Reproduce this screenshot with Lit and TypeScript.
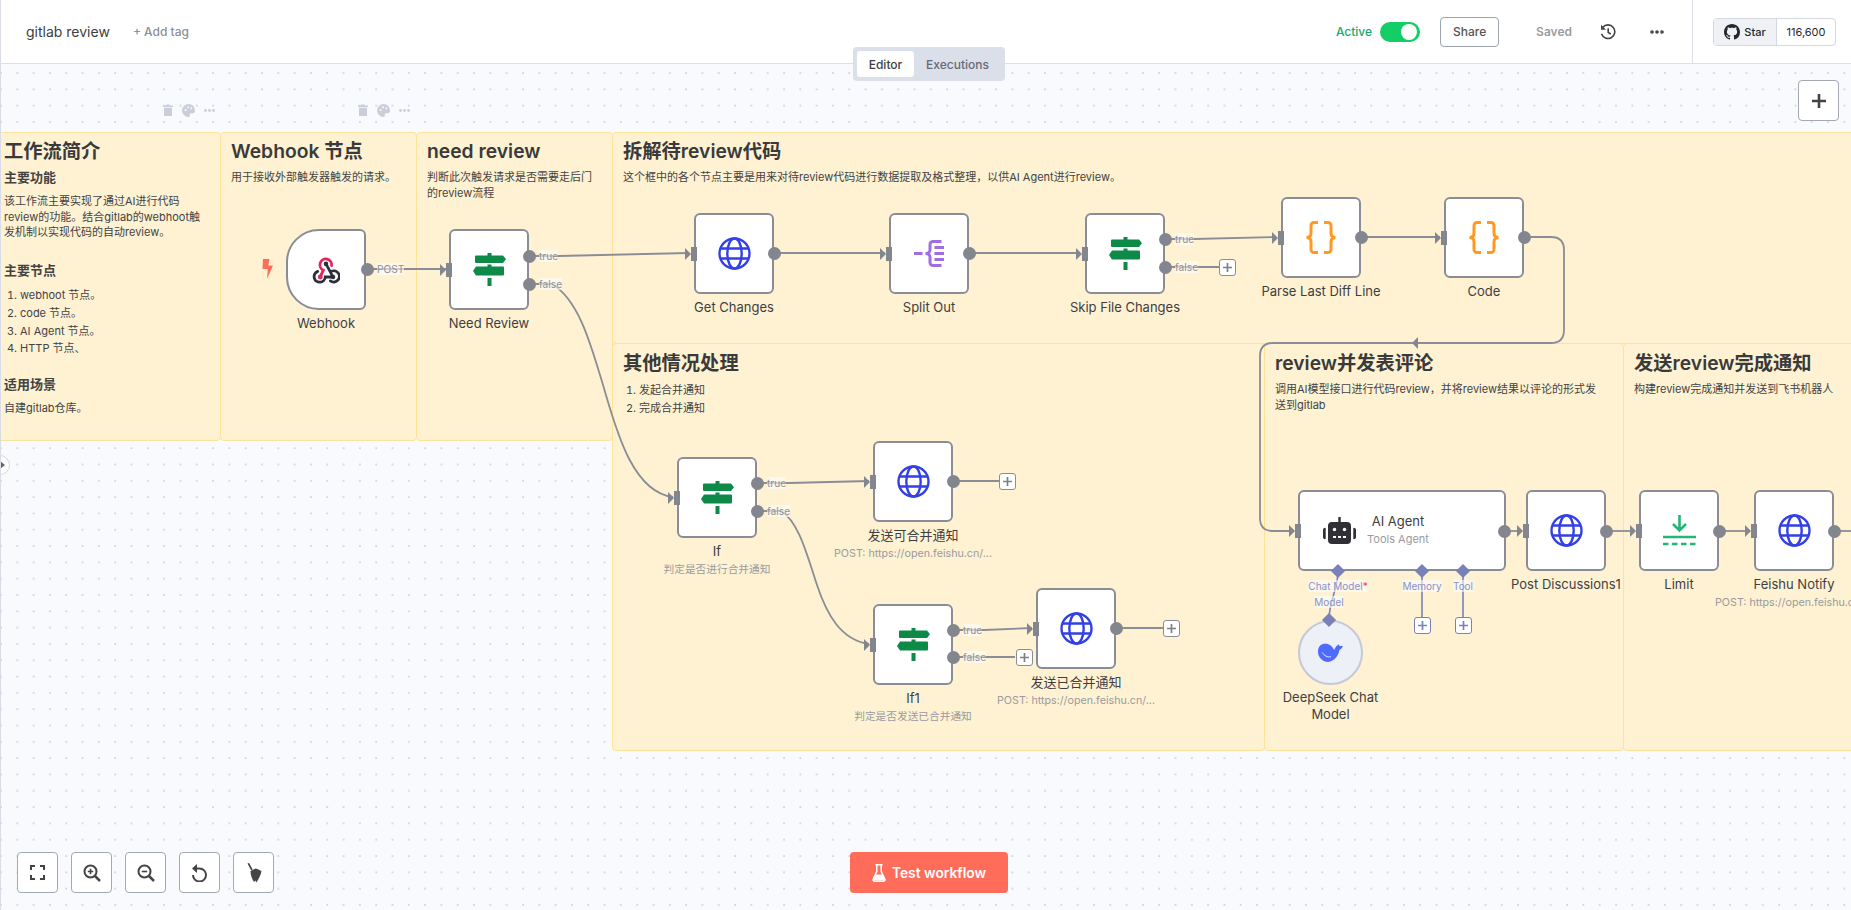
import { LitElement, css, html, svg } from "lit";
import { customElement } from "lit/decorators.js";

const icons: Record<string, any> = {
  webhook: html`<svg width="28" height="28" viewBox="0 0 32 32" fill="none" stroke-width="3.200" stroke-linecap="round">
    <path stroke="#2b303b" d="M16 9 23.8 23.5M6.500 17.600A6.400 6.400 0 1 0 15.200 24H24M21.600 17.800A6.400 6.400 0 1 1 21 28.500"/>
    <path stroke="#e0265f" d="M9.500 23.500 13 16.200A6.700 6.700 0 1 1 22.400 11"/>
    <circle cx="16" cy="9" r="2.600" fill="#2b303b" stroke="none"/>
    <circle cx="9.500" cy="24" r="2.800" fill="#e0265f" stroke="none"/>
    <circle cx="24" cy="24" r="2.600" fill="#2b303b" stroke="none"/>
  </svg>`,
  sign: html`<svg width="33" height="33" viewBox="0 0 33 33" fill="#0d8a48">
    <path d="M14.500 0h4v3h-4zM3 2.500h27l3 3.700-3 3.800H3a1 1 0 0 1-1-1V3.500a1 1 0 0 1 1-1zM14.500 11.500h4v2h-4zM3 13.500h27a1 1 0 0 1 1 1v7a1 1 0 0 1-1 1H3L0 18zM14.500 25h4v8h-4z"/>
  </svg>`,
  globe: html`<svg width="33" height="33" viewBox="0 0 33 33" fill="none" stroke="#3340e6" stroke-width="2.400">
    <circle cx="16.500" cy="16.500" r="15"/><ellipse cx="16.500" cy="16.500" rx="7.200" ry="15"/>
    <path d="M2.500 11.500h28M2.500 21.500h28"/>
  </svg>`,
  split: html`<svg width="30" height="27" viewBox="0 0 30 27" fill="none" stroke="#a06ee0" stroke-width="3">
    <path d="M0 13.500h8.500M27.500 1.500H19a3 3 0 0 0-3 3V10c0 2-2 3.500-4.500 3.500C14 13.500 16 15 16 17v5.500a3 3 0 0 0 3 3h8.500M20.500 7.500H30M20.500 13.500H30M20.500 19.500H30"/>
  </svg>`,
  code: html`<svg width="32" height="33" viewBox="0 0 32 33" fill="none" stroke="#ff9922" stroke-width="3">
    <path d="M13 1.500H9a3 3 0 0 0-3 3V12c0 3-2 4.500-4.500 4.500C4 16.500 6 18 6 21v7.500a3 3 0 0 0 3 3h4M19 1.500h4a3 3 0 0 1 3 3V12c0 3 2 4.500 4.500 4.500C28 16.500 26 18 26 21v7.500a3 3 0 0 1-3 3h-4"/>
  </svg>`,
  robot: html`<svg width="33" height="27" viewBox="0 0 33 27">
    <path fill="#2f2f35" d="M15.300 0h2.400v5h-2.400zM9 5h15a4 4 0 0 1 4 4v14a4 4 0 0 1-4 4H9a4 4 0 0 1-4-4V9a4 4 0 0 1 4-4zM0 13a2 2 0 0 1 2.700-2v11A2 2 0 0 1 0 20zM33 13a2 2 0 0 0-2.700-2v11a2 2 0 0 0 2.700-2z"/>
    <g fill="#fff"><circle cx="11.500" cy="12.500" r="1.700"/><circle cx="21.500" cy="12.500" r="1.700"/><path d="M10 19h3v2h-3zM15 19h3v2h-3zM20 19h3v2h-3z"/></g>
  </svg>`,
  limit: html`<svg width="33" height="31" viewBox="0 0 33 31" fill="none" stroke="#25b574" stroke-width="2.600">
    <path d="M16.500 0v15M10 9l6.500 6.500L23 9M0 22h33"/><path stroke-dasharray="5.500 3.500" d="M0 29h33"/>
  </svg>`,
  whale: html`<svg width="25" height="19" viewBox="0 0 24 18">
    <path fill="#4d6bfe" d="M0 8C0 3 3 .5 7 .5c4 0 7 2.500 8.500 6C16.500 4 18 2 20 1c0 1.500 1 2 2.500 1.500L24 3c-1 2-2.500 3-3.500 3.500C20 11 16.500 17 10 18 4.500 18 0 14 0 8z"/>
    <path fill="none" stroke="#eef0f7" stroke-width="0.900" d="M4 9c2 3 5 5 8.500 4"/>
  </svg>`,
  bolt: html`<svg width="11" height="20" viewBox="0 0 11 20"><path fill="#ff6d5a" d="M1 0h6.500L6.300 6.500H11L5 20l.8-10H.5z"/></svg>`,
  trash: html`<svg width="10" height="12" viewBox="0 0 10 12" fill="#c9ced8"><path d="M0 1.500h3.200V.5h3.600v1H10V3H0zM1 3.800h8V12H1z"/></svg>`,
  palette: html`<svg width="13" height="13" viewBox="0 0 13 13"><path fill="#c9ced8" d="M6.500 0a6.500 6.500 0 0 0 0 13c1.200 0 1.600-.8 1.300-1.600-.4-1 .2-2.200 1.500-2.200H11c1.200 0 2-1 2-2.700C13 2.800 10 0 6.500 0z"/><g fill="#fbfbfd"><circle cx="3.500" cy="6" r="1"/><circle cx="6" cy="3.300" r="1"/><circle cx="9.300" cy="4.300" r="1"/></g></svg>`,
  dots: html`<svg width="11" height="3" viewBox="0 0 11 3" fill="#c9ced8"><circle cx="1.500" cy="1.500" r="1.400"/><circle cx="5.500" cy="1.500" r="1.400"/><circle cx="9.500" cy="1.500" r="1.400"/></svg>`,
  fit: html`<svg width="15" height="15" viewBox="0 0 15 15" fill="none" stroke="#444" stroke-width="2"><path d="M1 5V1h4M10 1h4v4M14 10v4h-4M5 14H1v-4"/></svg>`,
  zoomIn: html`<svg width="18" height="18" viewBox="0 0 18 18" fill="none" stroke="#444" stroke-width="2"><circle cx="7.500" cy="7.500" r="6"/><path stroke-width="2.500" d="m12 12 5 5"/><path stroke-width="1.600" d="M4.800 7.500h5.400M7.500 4.800v5.400"/></svg>`,
  zoomOut: html`<svg width="18" height="18" viewBox="0 0 18 18" fill="none" stroke="#444" stroke-width="2"><circle cx="7.500" cy="7.500" r="6"/><path stroke-width="2.500" d="m12 12 5 5"/><path stroke-width="1.600" d="M4.800 7.500h5.400"/></svg>`,
  undo: html`<svg width="17" height="18" viewBox="0 0 17 18" fill="none" stroke="#444" stroke-width="2"><path d="M5 4.500h3.500A6.500 6.500 0 1 1 2 11"/><path fill="#444" stroke="none" d="M6 0v9L1 4.500z"/></svg>`,
  broom: html`<svg width="16" height="20" viewBox="0 0 16 20" fill="#444"><path d="m1.500.500 1.600-.5 3.600 6.500-1.600.8zM4.500 8l5-2.500c2.500.5 4.500 2 6 2.500-.5 4-3 8-5 11.500l-1-2L8 19C6 16 4.500 12 4.500 8z"/></svg>`,
  history: html`<svg width="16" height="16" viewBox="0 0 16 16" fill="none" stroke="#444" stroke-width="1.600"><path d="M2.800 3.300A6.800 6.800 0 1 1 1.500 9.800"/><path fill="#444" stroke="none" d="M1 .8v5h5z"/><path d="M8.200 4.200v4.300l2.600 1.500"/></svg>`,
  more: html`<svg width="14" height="4" viewBox="0 0 14 4" fill="#444"><circle cx="2" cy="2" r="1.800"/><circle cx="7" cy="2" r="1.800"/><circle cx="12" cy="2" r="1.800"/></svg>`,
  flask: html`<svg width="14" height="18" viewBox="0 0 14 18" fill="none" stroke="#fff" stroke-width="1.500"><path d="M3.500.8h7M4.800.8v6.700L1.200 15a1.500 1.500 0 0 0 1.400 2.200h8.800a1.500 1.500 0 0 0 1.400-2.200L9.200 7.500V.8"/><path fill="#fff" stroke="none" d="M3.600 10.500h6.800l2.600 6H1z"/></svg>`,
  plus: html`<svg width="16" height="16" viewBox="0 0 16 16" fill="none" stroke="#444" stroke-width="2.600"><path d="M8 1v14M1 8h14"/></svg>`,
  github: html`<svg width="16" height="16" viewBox="0 0 16 16"><path fill="#24292f" d="M8 0C3.580 0 0 3.580 0 8c0 3.540 2.290 6.530 5.470 7.590.4.070.55-.17.55-.38 0-.19-.01-.82-.01-1.490-2.010.37-2.530-.49-2.690-.94-.09-.23-.48-.94-.82-1.130-.28-.15-.68-.52-.01-.53.63-.01 1.080.58 1.230.82.72 1.210 1.870.87 2.330.66.070-.52.28-.87.51-1.070-1.780-.2-3.640-.89-3.640-3.950 0-.87.31-1.590.82-2.150-.08-.2-.36-1.020.08-2.120 0 0 .67-.21 2.200.82.64-.18 1.320-.27 2-.27s1.360.09 2 .27c1.530-1.040 2.200-.82 2.200-.82.44 1.100.16 1.920.08 2.120.51.56.82 1.270.82 2.150 0 3.070-1.870 3.750-3.650 3.950.29.25.54.73.54 1.480 0 1.070-.01 1.930-.01 2.200 0 .21.15.46.55.38A8.010 8.010 0 0 0 16 8c0-4.420-3.580-8-8-8z"/></svg>`,
};

type GraphNode = { x: number; y: number; label: string; sub?: string; icon: string; cls?: string; noInput?: boolean };

const nodes: GraphNode[] = [
  { x: 287, y: 229, label: "Webhook", icon: "webhook", cls: "trigger", noInput: true },
  { x: 450, y: 229, label: "Need Review", icon: "sign" },
  { x: 695, y: 213, label: "Get Changes", icon: "globe" },
  { x: 890, y: 213, label: "Split Out", icon: "split" },
  { x: 1086, y: 213, label: "Skip File Changes", icon: "sign" },
  { x: 1282, y: 197, label: "Parse Last Diff Line", icon: "code" },
  { x: 1445, y: 197, label: "Code", icon: "code" },
  { x: 678, y: 457, label: "If", sub: "判定是否进行合并通知", icon: "sign" },
  { x: 874, y: 441, label: "发送可合并通知", sub: "POST: https://open.feishu.cn/...", icon: "globe" },
  { x: 874, y: 604, label: "If1", sub: "判定是否发送已合并通知", icon: "sign" },
  { x: 1037, y: 588, label: "发送已合并通知", sub: "POST: https://open.feishu.cn/...", icon: "globe" },
  { x: 1527, y: 490, label: "Post Discussions1", icon: "globe" },
  { x: 1640, y: 490, label: "Limit", icon: "limit" },
  { x: 1755, y: 490, label: "Feishu Notify", sub: "POST: https://open.feishu.cn/...", icon: "globe" },
];

// output dots, one per connector
const dots: [number, number][] = [
  [368, 269], [530, 256], [530, 284], [775, 253], [970, 253], [1166, 239], [1166, 267], [1362, 237], [1525, 237],
  [758, 483], [758, 511], [954, 481], [954, 630], [954, 657], [1117, 628], [1505, 531], [1607, 531], [1720, 531], [1835, 531],
];

const edges = [
  "M368 269H447",
  "M530 256H560L690 253",
  "M775 253H886", "M970 253H1081",
  "M1166 239H1195L1277 237", "M1166 267H1220",
  "M1362 237H1441",
  "M1525 237H1552Q1565 237 1565 250V330Q1565 343 1552 343H1274Q1261 343 1261 356V518Q1261 531 1274 531H1293",
  "M530 284H553C580 300 592 345 604 385C616 425 632 492 674 497",
  "M758 483H790L870 481", "M758 511H782C800 522 808 555 818 585C828 615 842 640 870 644",
  "M954 481H1000", "M954 630H985L1033 628", "M954 657H1016", "M1117 628H1164",
  "M1505 531H1522", "M1607 531H1636", "M1720 531H1750", "M1835 531H1852",
];

const aiEdges = ["M1423 571V617", "M1464 571V617", "M1339 571C1339 590 1330 600 1330 620"];

const pluses: [number, number, boolean][] = [
  [1228, 267, false], [1008, 481, false], [1025, 657, false], [1172, 628, false], [1423, 625, true], [1464, 625, true],
];

const edgeLabels: [number, number, string][] = [
  [378, 269, "POST"], [540, 256, "true"], [540, 284, "false"], [1176, 239, "true"], [1176, 267, "false"],
  [768, 483, "true"], [768, 511, "false"], [964, 630, "true"], [964, 657, "false"],
];

const portLabels: [number, number, string, boolean][] = [
  [1339, 586, "Chat Model", true], [1423, 586, "Memory", false], [1464, 586, "Tool", false], [1330, 602, "Model", false],
];

@customElement("app-root")
export class AppRoot extends LitElement {
  static styles = css`
    :host {
      display: flex;
      flex-direction: column;
      width: 1851px;
      height: 910px;
      font-family: Inter, "Noto Sans CJK SC", sans-serif;
      color: #3e3e42;
      overflow: hidden;
      box-sizing: border-box;
      border-left: 1px solid #d9dde8;
    }
    header {
      height: 63px;
      flex: none;
      display: flex;
      align-items: center;
      background: #fff;
      border-bottom: 1px solid #dbdfe7;
      padding-left: 25px;
    }
    .name { font-size: 14px; }
    .tag { font-size: 12px; font-weight: 500; color: #8c8f98; margin-left: 23px; }
    .spacer { flex: 1; }
    .active { font-size: 12px; font-weight: 500; color: #17a673; }
    .toggle {
      width: 40px; height: 20px; margin-left: 8px; border-radius: 10px; background: #13ce66;
      display: flex; justify-content: flex-end; align-items: center; padding-right: 3px; box-sizing: border-box;
    }
    .toggle i { width: 16px; height: 16px; border-radius: 50%; background: #fff; }
    .share {
      width: 59px; height: 30px; margin-left: 20px; box-sizing: border-box; border: 1px solid #9ca3b3; border-radius: 4px;
      display: flex; align-items: center; justify-content: center; font-size: 12px; font-weight: 500; color: #555;
    }
    .saved { font-size: 12px; font-weight: 600; color: #9a9ca3; margin-left: 37px; }
    .hist { margin-left: 28px; display: flex; }
    .more { margin-left: 34px; display: flex; }
    .gh-wrap {
      margin-left: 28px; width: 159px; height: 100%; box-sizing: border-box; border-left: 1px solid #dbdfe7;
      display: flex; align-items: center; padding-left: 20px;
    }
    .gh {
      display: flex; height: 28px; width: 123px; box-sizing: border-box; border: 1px solid #d5d8de; border-radius: 4px;
      font-size: 11px; color: #24292f; overflow: hidden;
    }
    .gh .star {
      width: 62px; background: #eff1f4; border-right: 1px solid #d5d8de; display: flex; align-items: center;
      justify-content: center; gap: 4px; font-weight: 500;
    }
    .gh .count { flex: 1; display: flex; align-items: center; justify-content: center; }
    .canvas {
      position: relative;
      flex: 1;
      background-color: #f9fafd;
      background-image: radial-gradient(circle at 1px 1px, #c9ccd4 0.55px, transparent 0.95px);
      background-size: 16.32px 16.32px;
      background-position: -1px 8px;
    }
    .world { position: absolute; left: -2px; top: -64px; width: 1853px; height: 910px; overflow: hidden; }
    .frame {
      position: absolute; box-sizing: border-box; background: #fef2d3; border: 1px solid #fde29a; border-radius: 4px;
      padding: 5px 10px; font-size: 11px; line-height: 15.700px; color: #434343;
    }
    .frame.top { padding-top: 4px; }
    .frame h1 { margin: 0; font-size: 19.300px; line-height: 28px; font-weight: 600; color: #3a3a3a; }
    .frame h3 { margin: 0; font-size: 13px; line-height: 18px; font-weight: 600; }
    .frame p { margin: 5px 0 0; }
    .frame ol { margin: 5px 0 0; padding-left: 16px; line-height: 17.700px; }
    .frame .lead { margin-top: 8px; }
    .frame.intro { padding-left: 13px; }
    .frame.intro h3 { margin-top: 3px; }
    .frame.intro h3.gap { margin-top: 20px; }
    .frame.intro h3.gap2 { margin-top: 17px; }
    .frame.intro ol { margin-top: 8px; }
    .edges { position: absolute; left: 0; top: 0; }
    .node {
      position: absolute; box-sizing: border-box; width: 80px; height: 81px; background: #fff;
      border: 2px solid #8a8d96; border-radius: 6px; display: flex; align-items: center; justify-content: center;
    }
    .node.trigger { border-radius: 33px 6px 6px 33px; }
    .caption {
      position: absolute; top: 100%; left: 50%; transform: translateX(-50%); padding-top: 7px; text-align: center; white-space: nowrap;
      font-size: 13px; line-height: 17px; color: #3e3e42;
    }
    .caption small { display: block; font-size: 10.700px; line-height: 13px; color: #9a9a9f; margin-top: 3px; }
    .agent {
      position: absolute; left: 1299px; top: 490px; width: 208px; height: 81px; box-sizing: border-box; background: #fff;
      border: 2px solid #8a8d96; border-radius: 6px; display: flex; align-items: center; padding-left: 23px;
    }
    .agent .txt { margin-left: 6px; width: 72px; text-align: center; font-size: 13px; line-height: 17px; }
    .agent small { display: block; font-size: 11px; color: #9a9a9f; margin-top: 1px; }
    .bubble {
      position: absolute; left: 1299px; top: 620px; width: 65px; height: 65px; box-sizing: border-box; border-radius: 50%;
      background: #eef0f7; border: 2px solid #c4c8d8; display: flex; align-items: center; justify-content: center;
    }
    .bubble .caption { line-height: 17px; padding-top: 6px; }
    .dot { position: absolute; width: 13px; height: 13px; margin: -6.500px 0 0 -6.500px; border-radius: 50%; background: #83868e; }
    .port { position: absolute; width: 6px; height: 14px; margin-top: -7px; background: #83868e; }
    .port::before {
      content: ""; position: absolute; right: 100%; top: 1px; border-style: solid; border-width: 6px 0 6px 6px;
      border-color: transparent transparent transparent #83868e;
    }
    .arrow-left {
      position: absolute; left: 1413px; top: 337px; border-style: solid; border-width: 6px 6px 6px 0;
      border-color: transparent #83868e transparent transparent;
    }
    .diamond { position: absolute; width: 10px; height: 10px; margin: -5px 0 0 -5px; background: #7a80b8; transform: rotate(45deg); }
    .plus {
      position: absolute; width: 17px; height: 17px; margin: -8.500px 0 0 -8.500px; box-sizing: border-box; background: #fff;
      border: 1.500px solid #8a8d96; border-radius: 3px; display: flex; align-items: center; justify-content: center;
      color: #7d8089;
    }
    .plus svg { display: block; }
    .plus.ai { border-color: #7a80b8; color: #7a80b8; }
    .elabel {
      position: absolute; transform: translateY(-50%); font-size: 10.200px; line-height: 12px; color: #8f9097;
      background: rgba(252, 252, 253, 0.6);
    }
    .plabel {
      position: absolute; transform: translate(-50%, -50%); font-size: 10px; line-height: 12px; color: #8b90c6; white-space: nowrap;
      background: rgba(252, 252, 253, 0.6);
    }
    .plabel b { color: #ff3355; font-weight: 400; }
    .tools { position: absolute; display: flex; align-items: center; gap: 9px; top: 103px; height: 14px; }
    .tabs {
      position: absolute; left: 852px; top: -17px; width: 152px; height: 34px; box-sizing: border-box; padding: 4px; background: #dbdfe9;
      border-radius: 4px; display: flex; align-items: stretch; font-size: 12px; font-weight: 500; color: #666a76;
    }
    .tabs span { display: flex; align-items: center; justify-content: center; }
    .tabs .on { width: 57px; background: #fff; border-radius: 3px; color: #3e3e42; }
    .tabs .off { flex: 1; }
    .btn {
      width: 41px; height: 41px; box-sizing: border-box; background: #fff; border: 1px solid #a4a8b4; border-radius: 4px;
      display: flex; align-items: center; justify-content: center;
    }
    .add { position: absolute; right: 12px; top: 16px; }
    .controls { position: absolute; left: 16px; bottom: 17px; display: flex; gap: 13px; }
    .run {
      position: absolute; left: 849px; bottom: 17px; width: 158px; height: 41px; border-radius: 4px; background: #ff6d5a; color: #fff;
      display: flex; align-items: center; justify-content: center; gap: 6px; font-size: 13.800px; font-weight: 600;
    }
    .collapse {
      position: absolute; left: -11px; top: 391px; width: 20px; height: 20px; border-radius: 50%; background: #fff; border: 1px solid #d5d8e2;
      display: flex; align-items: center; justify-content: flex-end; padding-right: 4px; box-sizing: border-box;
    }
    .collapse i { border-style: solid; border-width: 4px 0 4px 5px; border-color: transparent transparent transparent #666; }
  `;

  private frameStyle(x: number, y: number, w: number, h: number) {
    return `left:${x + 1}px;top:${y}px;width:${w}px;height:${h}px`;
  }

  private renderFrames() {
    return html`
      <div class="frame top intro" style=${this.frameStyle(-10, 132, 231, 309)}>
        <h1>工作流简介</h1>
        <h3>主要功能</h3>
        <p class="lead">该工作流主要实现了通过AI进行代码<br />review的功能。结合gitlab的webhoot触<br />发机制以实现代码的自动review。</p>
        <h3 class="gap">主要节点</h3>
        <ol><li>webhoot 节点。</li><li>code 节点。</li><li>AI Agent 节点。</li><li>HTTP 节点、</li></ol>
        <h3 class="gap2">适用场景</h3>
        <p class="lead">自建gitlab仓库。</p>
      </div>
      <div class="frame top" style=${this.frameStyle(220, 132, 197, 309)}>
        <h1>Webhook 节点</h1>
        <p>用于接收外部触发器触发的请求。</p>
      </div>
      <div class="frame top" style=${this.frameStyle(416, 132, 197, 309)}>
        <h1>need review</h1>
        <p>判断此次触发请求是否需要走后门<br />的review流程</p>
      </div>
      <div class="frame top" style=${this.frameStyle(612, 132, 1270, 212)}>
        <h1>拆解待review代码</h1>
        <p>这个框中的各个节点主要是用来对待review代码进行数据提取及格式整理，以供AI Agent进行review。</p>
      </div>
      <div class="frame" style=${this.frameStyle(612, 343, 653, 408)}>
        <h1>其他情况处理</h1>
        <ol><li>发起合并通知</li><li>完成合并通知</li></ol>
      </div>
      <div class="frame" style=${this.frameStyle(1264, 343, 360, 408)}>
        <h1>review并发表评论</h1>
        <p>调用AI模型接口进行代码review，并将review结果以评论的形式发<br />送到gitlab</p>
      </div>
      <div class="frame" style=${this.frameStyle(1623, 343, 260, 408)}>
        <h1>发送review完成通知</h1>
        <p>构建review完成通知并发送到飞书机器人</p>
      </div>
    `;
  }

  render() {
    return html`
      <header>
        <span class="name">gitlab review</span>
        <span class="tag">+ Add tag</span>
        <span class="spacer"></span>
        <span class="active">Active</span>
        <span class="toggle"><i></i></span>
        <span class="share">Share</span>
        <span class="saved">Saved</span>
        <span class="hist">${icons.history}</span>
        <span class="more">${icons.more}</span>
        <div class="gh-wrap">
          <div class="gh">
            <span class="star">${icons.github}Star</span>
            <span class="count">116,600</span>
          </div>
        </div>
      </header>
      <div class="canvas">
        <div class="world">
          ${this.renderFrames()}
          <div class="tools" style="left:164px">${icons.trash}${icons.palette}${icons.dots}</div>
          <div class="tools" style="left:359px">${icons.trash}${icons.palette}${icons.dots}</div>
          <svg class="edges" width="1853" height="910" fill="none">
            ${edges.map((d) => svg`<path d=${d} stroke="#8a8d96" stroke-width="1.800"/>`)}
            ${aiEdges.map((d) => svg`<path d=${d} stroke="#7a80b8" stroke-width="1.600"/>`)}
          </svg>
          <div style="position:absolute;left:263px;top:259px;display:flex">${icons.bolt}</div>
          ${nodes.map(
            (n) => html`
              <div class="node ${n.cls ?? ""}" style="left:${n.x}px;top:${n.y}px">
                ${icons[n.icon]}
                <div class="caption">${n.label}${n.sub ? html`<small>${n.sub}</small>` : ""}</div>
              </div>
              ${n.noInput ? "" : html`<div class="port" style="left:${n.x - 3}px;top:${n.y + 40.5}px"></div>`}
            `
          )}
          <div class="agent">
            ${icons.robot}
            <div class="txt">AI Agent<small>Tools Agent</small></div>
          </div>
          <div class="port" style="left:1296px;top:531px"></div>
          <div class="arrow-left"></div>
          <div class="bubble">
            ${icons.whale}
            <div class="caption">DeepSeek Chat<br />Model</div>
          </div>
          ${dots.map(([x, y]) => html`<div class="dot" style="left:${x}px;top:${y}px"></div>`)}
          ${[[1339, 571], [1423, 571], [1464, 571], [1330, 620]].map(
            ([x, y]) => html`<div class="diamond" style="left:${x}px;top:${y}px"></div>`
          )}
          ${pluses.map(
            ([x, y, ai]) => html`<div class="plus ${ai ? "ai" : ""}" style="left:${x}px;top:${y}px">
              <svg width="9" height="9" viewBox="0 0 9 9" fill="none" stroke="currentColor" stroke-width="1.700"><path d="M4.500 0v9M0 4.500h9"/></svg>
            </div>`
          )}
          ${edgeLabels.map(([x, y, t]) => html`<span class="elabel" style="left:${x}px;top:${y}px">${t}</span>`)}
          ${portLabels.map(
            ([x, y, t, req]) => html`<span class="plabel" style="left:${x}px;top:${y}px">${t}${req ? html`<b>*</b>` : ""}</span>`
          )}
        </div>
        <div class="tabs"><span class="on">Editor</span><span class="off">Executions</span></div>
        <div class="btn add">${icons.plus}</div>
        <div class="collapse"><i></i></div>
        <div class="controls">
          <div class="btn">${icons.fit}</div>
          <div class="btn">${icons.zoomIn}</div>
          <div class="btn">${icons.zoomOut}</div>
          <div class="btn">${icons.undo}</div>
          <div class="btn">${icons.broom}</div>
        </div>
        <div class="run">${icons.flask}Test workflow</div>
      </div>
    `;
  }
}
